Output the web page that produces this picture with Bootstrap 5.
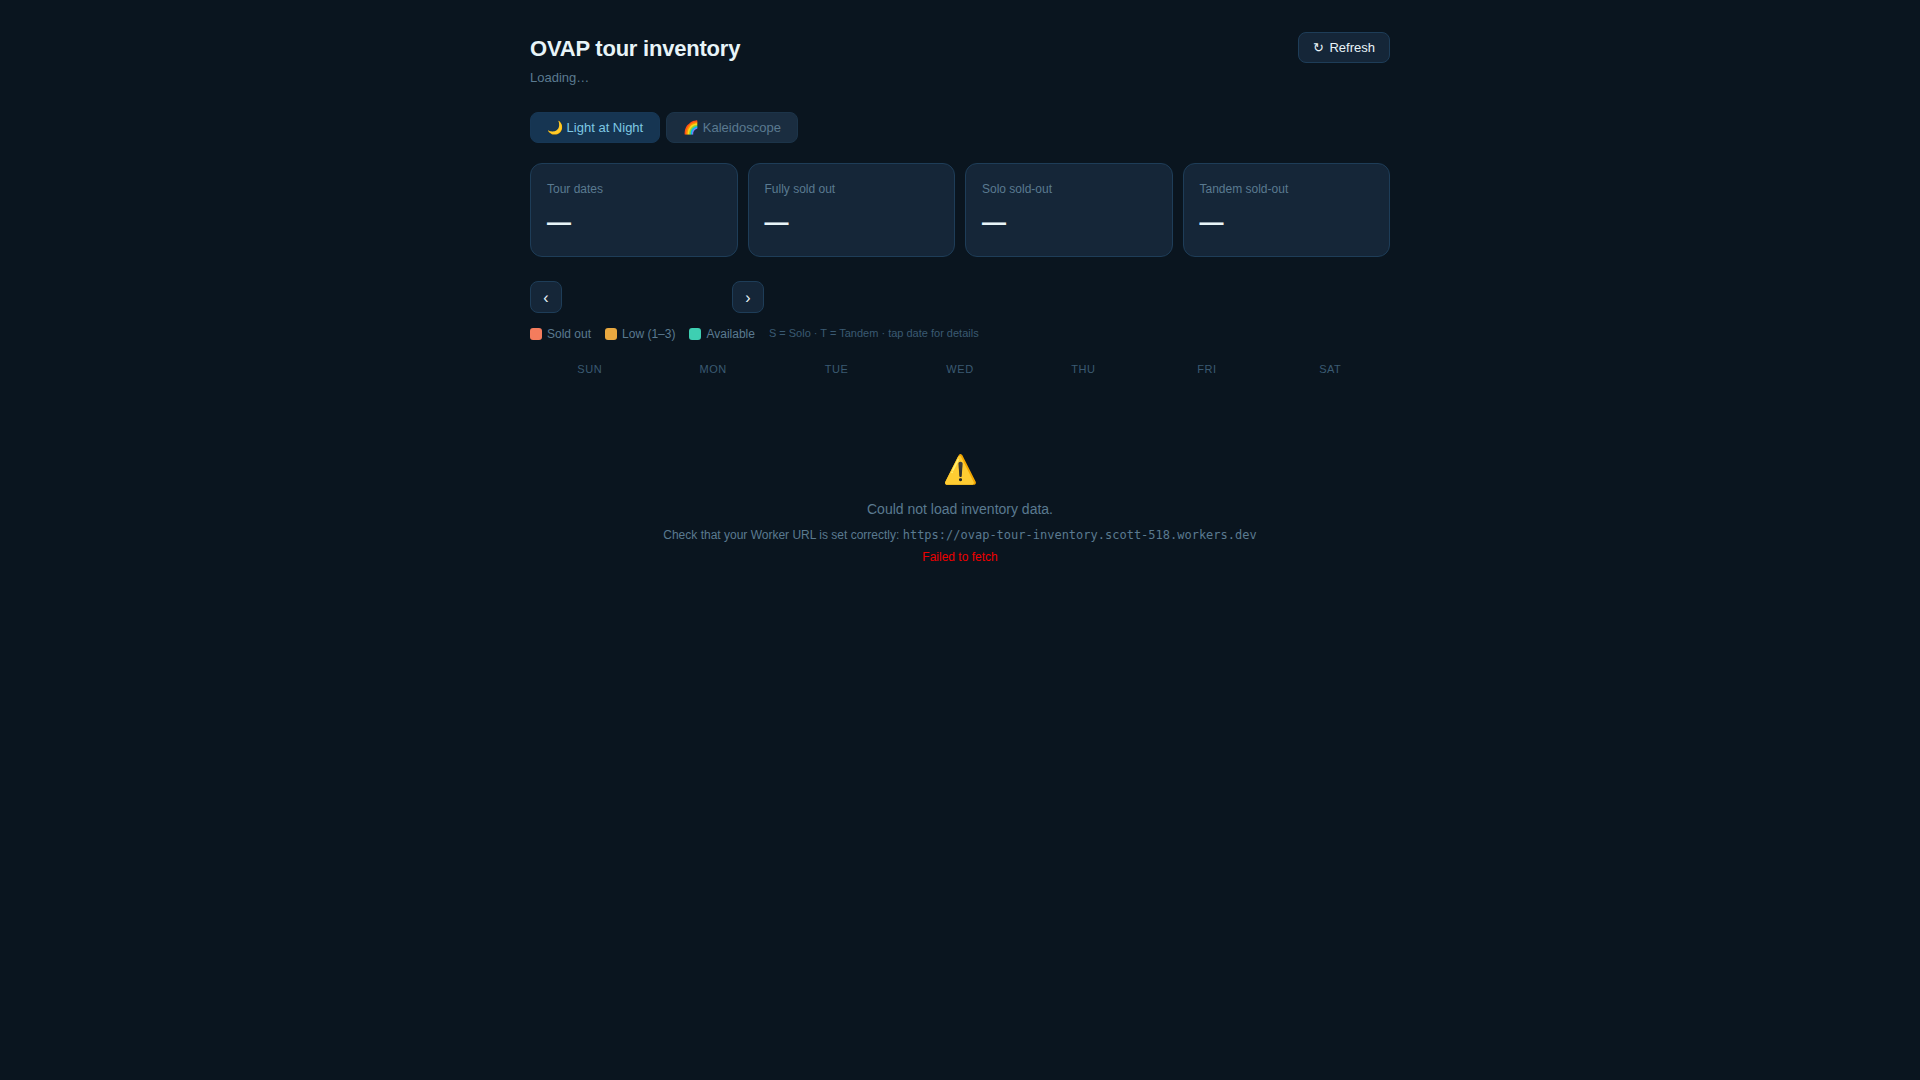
<!DOCTYPE html>
<html lang="en">
<head>
<meta charset="utf-8">
<meta name="viewport" content="width=device-width, initial-scale=1">
<title>OVAP tour inventory</title>
<link href="https://cdn.jsdelivr.net/npm/bootstrap@5.3.0/dist/css/bootstrap.min.css" rel="stylesheet">
<style>
  :root {
    --page: #0a151f;
    --surface: #152638;
    --line: #1e3d58;
    --ink: #e8f4f8;
    --muted: #5a7a90;
    --faint: #3a5a72;
  }
  body {
    background: var(--page);
    color: var(--ink);
    font-family: "Liberation Sans", Arial, sans-serif;
    font-size: 14px;
    line-height: 20px;
  }
  .shell { max-width: 900px; padding: 32px 20px; }
  .page-title { font-size: 22px; line-height: 33px; font-weight: 700; letter-spacing: -0.01em; margin-bottom: 3px; }
  .status { font-size: 13px; line-height: 20px; color: var(--muted); }
  .page-head { margin-bottom: 24px; }
  .ctl {
    --bs-btn-color: var(--ink);
    --bs-btn-bg: var(--surface);
    --bs-btn-border-color: var(--line);
    --bs-btn-hover-color: var(--ink);
    --bs-btn-hover-bg: #1b3045;
    --bs-btn-hover-border-color: var(--line);
    --bs-btn-border-radius: 8px;
    --bs-btn-font-size: 13px;
    --bs-btn-line-height: 15px;
    --bs-btn-padding-x: 14px;
    --bs-btn-padding-y: 7px;
  }
  .refresh { gap: 5px; }
  .tour-tab {
    --bs-btn-padding-x: 16px;
    --bs-btn-color: var(--muted);
    --bs-btn-bg: #1a2d40;
    --bs-btn-border-color: #1c3449;
    --bs-btn-active-color: #7ec8e3;
    --bs-btn-active-bg: #163552;
    --bs-btn-active-border-color: #173755;
  }
  .tabs { gap: 6px; margin-bottom: 20px; }
  .stats { gap: 10px; margin-bottom: 24px; }
  .stat {
    --bs-card-bg: var(--surface);
    --bs-card-border-color: var(--line);
    --bs-card-border-radius: 12px;
    --bs-card-color: var(--ink);
    flex: 1 1 0;
    padding: 16px;
  }
  .stat-name { font-size: 12px; line-height: 18px; color: var(--muted); margin-bottom: 6px; }
  .stat-value { font-size: 24px; line-height: 36px; font-weight: 700; }
  .month-nav { gap: 10px; margin-bottom: 12px; }
  .month-name { width: 150px; }
  .step { width: 32px; height: 32px; --bs-btn-padding-x: 0; --bs-btn-padding-y: 0; --bs-btn-font-size: 16px; }
  .legend-row { gap: 14px; font-size: 12px; line-height: 18px; color: var(--muted); margin-bottom: 14px; }
  .legend-row > span { gap: 5px; }
  .swatch { width: 12px; height: 12px; border-radius: 3px; }
  .sold { background: #f47c5d; }
  .low { background: #e8a840; }
  .open { background: #3ecfb2; }
  .hint { font-size: 11px; line-height: 16px; color: var(--faint); }
  .weekdays { gap: 4px; font-size: 11px; line-height: 17px; color: var(--faint); letter-spacing: 0.05em; padding: 4px 0; margin-bottom: 7px; }
  .weekdays > div { flex: 1 1 0; }
  .failure { padding: 60px 20px; color: var(--muted); }
  .failure-icon { font-size: 28px; line-height: 42px; margin-bottom: 8px; }
  .failure-title { margin-bottom: 7px; }
  .failure-detail { font-size: 12px; line-height: 18px; }
  .failure-detail code { font-family: "DejaVu Sans Mono", monospace; font-size: 12px; color: inherit; }
  .failure-reason { color: #ee0000; }
</style>
</head>
<body>
<main class="shell container-fluid">
  <header class="page-head d-flex justify-content-between align-items-start">
    <div>
      <h1 class="page-title">OVAP tour inventory</h1>
      <p class="status mb-0">Loading…</p>
    </div>
    <button type="button" class="btn ctl refresh d-flex"><span>↻</span>Refresh</button>
  </header>

  <div class="tabs d-flex">
    <button type="button" class="btn ctl tour-tab active" aria-pressed="true">🌙 Light at Night</button>
    <button type="button" class="btn ctl tour-tab" aria-pressed="false">🌈 Kaleidoscope</button>
  </div>

  <section class="stats d-flex">
    <div class="card stat"><div class="stat-name">Tour dates</div><div class="stat-value">—</div></div>
    <div class="card stat"><div class="stat-name">Fully sold out</div><div class="stat-value">—</div></div>
    <div class="card stat"><div class="stat-name">Solo sold-out</div><div class="stat-value">—</div></div>
    <div class="card stat"><div class="stat-name">Tandem sold-out</div><div class="stat-value">—</div></div>
  </section>

  <nav class="month-nav d-flex align-items-center">
    <button type="button" class="btn ctl step" aria-label="Previous month">‹</button>
    <span class="month-name"></span>
    <button type="button" class="btn ctl step" aria-label="Next month">›</button>
  </nav>

  <div class="legend-row d-flex flex-wrap">
    <span class="d-flex align-items-center"><i class="swatch sold"></i>Sold out</span>
    <span class="d-flex align-items-center"><i class="swatch low"></i>Low (1–3)</span>
    <span class="d-flex align-items-center"><i class="swatch open"></i>Available</span>
    <span class="hint">S = Solo · T = Tandem · tap date for details</span>
  </div>

  <div class="weekdays d-flex text-center text-uppercase">
    <div>Sun</div><div>Mon</div><div>Tue</div><div>Wed</div><div>Thu</div><div>Fri</div><div>Sat</div>
  </div>

  <section class="failure text-center" role="alert">
    <div class="failure-icon">⚠️</div>
    <p class="failure-title">Could not load inventory data.</p>
    <p class="failure-detail mb-1">Check that your Worker URL is set correctly: <code>https://ovap-tour-inventory.scott-518.workers.dev</code></p>
    <p class="failure-detail failure-reason mb-0">Failed to fetch</p>
  </section>
</main>
<script src="https://cdn.jsdelivr.net/npm/bootstrap@5.3.0/dist/js/bootstrap.bundle.min.js"></script>
</body>
</html>
